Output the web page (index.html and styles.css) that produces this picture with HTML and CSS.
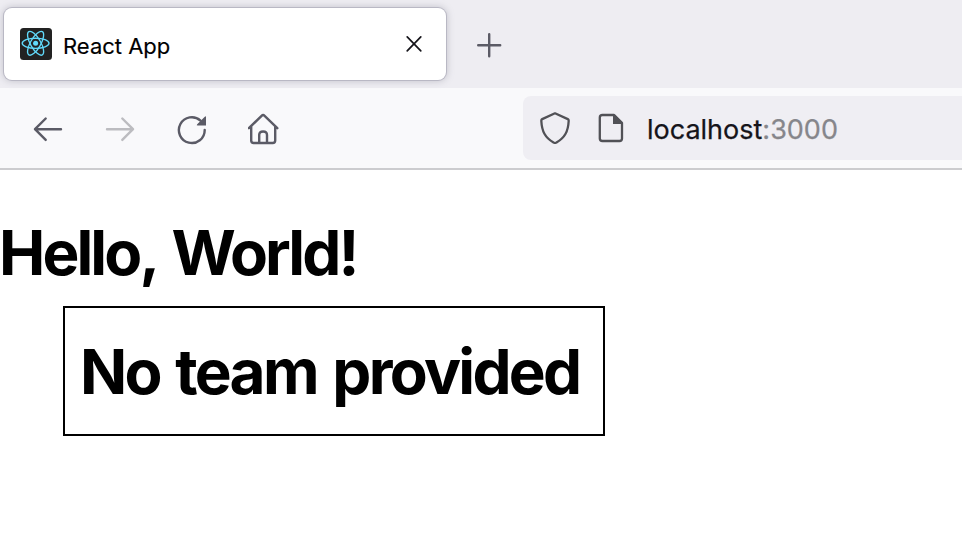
FILE: index.html
```html
<!DOCTYPE html>
<html lang="en">
<head>
<meta charset="utf-8">
<title>React App</title>
<link rel="stylesheet" href="styles.css">
</head>
<body>
<header class="tabs">
  <div class="tab">
    <svg class="favicon" width="32" height="32" viewBox="0 0 32 32">
      <rect width="32" height="32" rx="3.5" fill="#222"/>
      <g fill="none" stroke="#61dafb" stroke-width="1.35" transform="translate(15.6 15.3)">
        <ellipse rx="13.4" ry="5.1"/>
        <ellipse rx="13.4" ry="5.1" transform="rotate(60)"/>
        <ellipse rx="13.4" ry="5.1" transform="rotate(120)"/>
        <circle r="2.5" fill="#61dafb" stroke="none"/>
      </g>
    </svg>
    <span class="tab-title">React App</span>
    <svg class="close" width="20" height="20" viewBox="0 0 20 20"><path d="M3.200 2.900l13.600 14M16.800 2.900l-13.600 14"/></svg>
  </div>
  <svg class="icon" width="32" height="32" viewBox="0 0 32 32"><path d="M16.200 5.200v22M5.200 16.200h22"/></svg>
</header>
<nav class="toolbar">
  <div class="buttons">
    <svg class="icon" width="32" height="32" viewBox="0 0 32 32"><path d="M29 16.200H3M13.700 5.500L3 16.200l10.700 10.700"/></svg>
    <svg class="icon disabled" width="32" height="32" viewBox="0 0 32 32"><path d="M3 16.200H29M18.300 5.500l10.700 10.700-10.700 10.700"/></svg>
    <svg class="icon" width="32" height="32" viewBox="0 0 32 32"><path d="M24.500 7.600A12.900 12.900 0 1 0 28.700 17"/><path class="solid" d="M30 3.300v9.200h-8.300q-1.700 0-.5-1.200l7.600-7.600z"/></svg>
    <svg class="icon" width="32" height="32" viewBox="0 0 32 32"><path d="M.9 15.200L13.600 2.800q1.500-1.400 3 0L29.300 15.200M3.200 13.500V27.500q0 2.500 2.500 2.500h19q2.500 0 2.500-2.500V13.500M11.200 30v-8q0-3.500 3.900-3.500t3.900 3.500v8"/></svg>
  </div>
  <div class="urlbar">
    <svg class="icon dark" width="32" height="32" viewBox="0 0 32 32"><path d="M16 1.300L28.800 7.100q.9.500.9 1.600C29.100 19.500 26 25.500 17.500 30.500q-1.500.8-3 0C6 25.500 2.900 19.500 2.300 8.700q0-1.100.9-1.600z"/></svg>
    <svg class="icon dark" width="32" height="32" viewBox="0 0 32 32"><path d="M19 3H7.500Q4.800 3 4.800 5.500v21Q4.800 29 7.500 29h17q2.500 0 2.500-2.500V11z"/><path class="solid" d="M18 2.500h2l7.500 7.500v2H18z"/></svg>
    <span class="url">localhost<span class="port">:3000</span></span>
  </div>
</nav>
<main>
  <h1>Hello, World!</h1>
  <section class="team"><h1 class="message">No team provided</h1></section>
</main>
</body>
</html>
```

FILE: styles.css
```css
* { box-sizing: border-box; }
body {
  margin: 0;
  height: 550px;
  overflow: hidden;
  background: #fff;
  color: #000;
  font-family: Inter, sans-serif;
}
svg { display: block; flex: none; }
.tabs {
  display: flex;
  align-items: flex-start;
  height: 88px;
  padding: 8px 4px;
  background: #eeedf2;
}
.tab {
  display: flex;
  align-items: center;
  width: 442px;
  height: 72px;
  padding: 0 22px 0 16px;
  border-radius: 8px;
  background: #fff;
  box-shadow: 0 0 0 1px #b9b8c4, 0 0 7px 1px rgba(128, 128, 142, .4);
}
.tab-title {
  flex: 1;
  margin: 4px 0 0 11px;
  font-size: 22px;
  line-height: 28px;
  color: #000;
  -webkit-text-stroke: .15px currentColor;
}
.close { fill: none; stroke: #15141a; stroke-width: 1.7; stroke-linecap: round; }
.tabs > .icon { margin: 21px 0 0 27px; }
.icon {
  fill: none;
  stroke: #5b5b66;
  stroke-width: 2.4;
  stroke-linecap: round;
  stroke-linejoin: round;
}
.icon.disabled { stroke: #bcbcc0; }
.icon.dark { stroke: #515156; stroke-width: 2.3; }
.icon .solid { fill: #5b5b66; stroke: none; }
.icon.dark .solid { fill: #515156; }
.toolbar {
  display: flex;
  align-items: flex-start;
  justify-content: space-between;
  height: 82px;
  padding: 8px 0 0 32px;
  border-bottom: 2px solid #cccccf;
  background: #f9f9fb;
}
.buttons { display: flex; gap: 40px; padding-top: 17px; }
.urlbar {
  display: flex;
  align-items: center;
  width: 439px;
  height: 64px;
  padding-left: 16px;
  gap: 24px;
  border-radius: 8px 0 0 8px;
  background: #efeef3;
}
.url {
  margin: 3px 0 0 -4px;
  font-size: 27px;
  line-height: 34px;
  color: #15141a;
  -webkit-text-stroke: .25px currentColor;
}
.port { color: #86868b; }
main { padding-top: 52px; }
h1 {
  margin: 0;
  font-size: 62px;
  line-height: 62px;
  font-weight: 700;
  letter-spacing: -2.9px;
  word-spacing: 4.5px;
  text-indent: -1px;
  white-space: nowrap;
}
.team {
  width: 542px;
  height: 130px;
  margin: 22px 0 0 63px;
  padding: 33px 15px;
  border: 2px solid #000;
}
.message { letter-spacing: -2.7px; word-spacing: 3.5px; text-indent: 0; }
```
